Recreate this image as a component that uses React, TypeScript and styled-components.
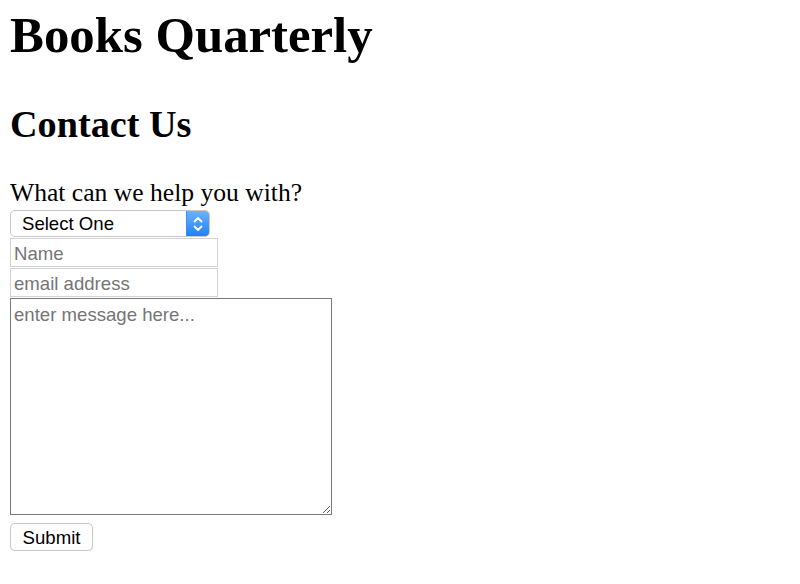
import React from "react";
import styled, { createGlobalStyle } from "styled-components";

const GlobalStyle = createGlobalStyle`
  html, body { margin: 0; padding: 0; background: #fff; }
  body { font-family: "Liberation Serif", "Times New Roman", serif; color: #000; }
`;

const Page = styled.div`
  display: flex;
  flex-direction: column;
  align-items: flex-start;
  padding: 6px 10px 0 10px;
  font-size: 25.6px;
`;

const Title = styled.h1`
  margin: 0;
  font-size: 50.8px;
  line-height: 58px;
  font-weight: bold;
`;

const SubTitle = styled.h2`
  margin: 38px 0 0 0;
  font-size: 38.2px;
  line-height: 44px;
  font-weight: bold;
`;

const Prompt = styled.p`
  margin: 32px 0 0 0;
  font-size: 25.6px;
  line-height: 30px;
`;

const Form = styled.form`
  display: flex;
  flex-direction: column;
  align-items: flex-start;
  gap: 1px;
  margin-top: 2px;
`;

const controlFont = `
  font-family: "Liberation Sans", Arial, Helvetica, sans-serif;
  font-size: 18.6px;
  color: #000;
`;

const SelectBox = styled.div`
  ${controlFont}
  position: relative;
  box-sizing: border-box;
  width: 200px;
  height: 27px;
  display: flex;
  align-items: center;
  border: 1px solid #c8c8c8;
  border-radius: 5px;
  background: #fff;
  padding-left: 11px;
  overflow: hidden;
`;

const SelectText = styled.span`
  flex: 1;
  line-height: 25px;
`;

const SelectArrow = styled.span`
  width: 22px;
  height: 100%;
  display: flex;
  align-items: center;
  justify-content: center;
  background: linear-gradient(#6cb3fa, #1f82f5);
  border-left: 1px solid #3d8ff0;
`;

const TextInput = styled.input`
  ${controlFont}
  box-sizing: border-box;
  width: 208px;
  height: 29px;
  margin: 0;
  padding: 2px 0 0 3px;
  border: 1px solid #d2d2d2;
  border-radius: 0;
  background: #fff;
  outline: none;
  &::placeholder { color: #757575; }
`;

const MessageArea = styled.textarea`
  ${controlFont}
  box-sizing: border-box;
  width: 322px;
  height: 217px;
  margin: 0;
  padding: 5px 3px;
  border: 1px solid #7a7a7a;
  border-radius: 0;
  resize: both;
  outline: none;
  line-height: 22px;
  &::placeholder { color: #757575; }
`;

const SubmitButton = styled.button`
  ${controlFont}
  box-sizing: border-box;
  width: 83px;
  height: 28px;
  margin-top: 7px;
  padding: 2px 0 0 0;
  border: 1px solid #c8c8c8;
  border-radius: 5px;
  background: #fff;
  box-shadow: 0 1px 1px rgba(0,0,0,0.08);
`;

export default function App() {
  return (
    <>
      <GlobalStyle />
      <Page>
        <Title>Books Quarterly</Title>
        <SubTitle>Contact Us</SubTitle>
        <Prompt>What can we help you with?</Prompt>
        <Form onSubmit={(e) => e.preventDefault()}>
          <SelectBox>
            <SelectText>Select One</SelectText>
            <SelectArrow>
              <svg width="12" height="18" viewBox="0 0 12 18" fill="none" stroke="#fff" strokeWidth="1.8" strokeLinecap="round" strokeLinejoin="round">
                <path d="M2.5 6.5 L6 3 L9.5 6.5" />
                <path d="M2.5 11.5 L6 15 L9.5 11.5" />
              </svg>
            </SelectArrow>
          </SelectBox>
          <TextInput type="text" placeholder="Name" />
          <TextInput type="email" placeholder="email address" />
          <MessageArea placeholder="enter message here..." />
          <SubmitButton type="submit">Submit</SubmitButton>
        </Form>
      </Page>
    </>
  );
}
